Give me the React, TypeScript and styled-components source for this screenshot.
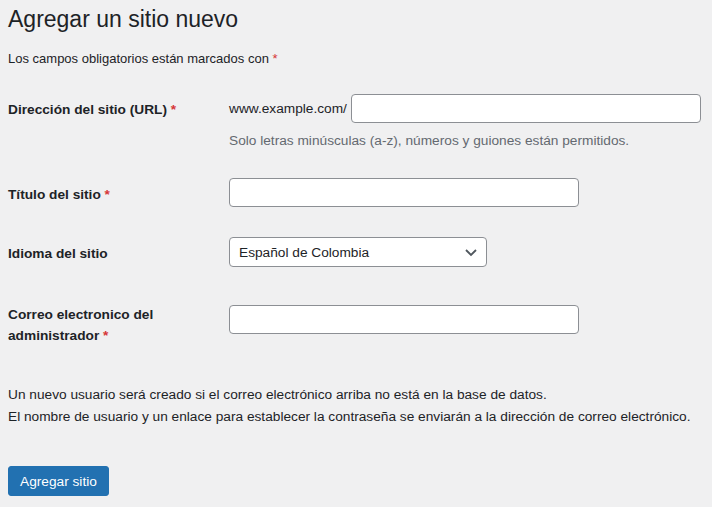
import React from "react";
import styled, { createGlobalStyle } from "styled-components";

const Global = createGlobalStyle`
  body {
    margin: 0;
    background: #f0f0f1;
    color: #1d2327;
    font-family: "Segoe UI", "Liberation Sans", Arial, sans-serif;
    font-size: 13.7px;
  }
`;

const Page = styled.div`
  padding: 0 8px;
`;

const Title = styled.h1`
  margin: 0;
  padding: 5px 0 4px;
  font-size: 23px;
  font-weight: 400;
  line-height: 29px;
`;

const Note = styled.p`
  margin: 11px 0 10px;
  line-height: 19px;
  font-size: 13px;
`;

const Req = styled.span`
  color: #d63638;
`;

const Form = styled.div`
  display: grid;
  grid-template-columns: 221px 1fr;
  align-items: start;
`;

const Label = styled.div<{ $top: number }>`
  font-weight: 600;
  line-height: 21px;
  padding-top: ${({ $top }) => $top}px;
`;

const Cell = styled.div<{ $top: number; $bottom: number }>`
  padding: ${({ $top, $bottom }) => `${$top}px 0 ${$bottom}px`};
`;

const Inline = styled.div`
  display: flex;
  align-items: center;
  gap: 4px;
`;

const Input = styled.input<{ $w: number }>`
  box-sizing: border-box;
  width: ${({ $w }) => $w}px;
  height: 29px;
  border: 1px solid #8c8f94;
  border-radius: 4px;
  background: #fff;
  font: inherit;
  padding: 0 8px;
`;

const Desc = styled.p`
  margin: 8px 0 0;
  color: #646970;
  line-height: 19px;
`;

const Select = styled.div`
  box-sizing: border-box;
  width: 258px;
  height: 30px;
  border: 1px solid #8c8f94;
  border-radius: 4px;
  background: #fff;
  display: flex;
  align-items: center;
  justify-content: space-between;
  padding: 0 8px 0 9px;
`;

const Info = styled.p`
  margin: 0;
  line-height: 22px;
`;

const Spacer = styled.div`
  height: 34px;
`;

const Button = styled.button`
  margin-top: 38px;
  height: 30px;
  padding: 0 11px;
  background: #2271b1;
  color: #fff;
  border: 1px solid #2271b1;
  border-radius: 3px;
  font: inherit;
`;

export default function App() {
  return (
    <Page>
      <Global />
      <Title>Agregar un sitio nuevo</Title>
      <Note>
        Los campos obligatorios están marcados con <Req>*</Req>
      </Note>
      <Form>
        <Label $top={21}>
          Dirección del sitio (URL) <Req>*</Req>
        </Label>
        <Cell $top={16} $bottom={11}>
          <Inline>
            www.example.com/
            <Input $w={350} />
          </Inline>
          <Desc>Solo letras minúsculas (a-z), números y guiones están permitidos.</Desc>
        </Cell>
        <Label $top={23}>
          Título del sitio <Req>*</Req>
        </Label>
        <Cell $top={17} $bottom={16}>
          <Input $w={350} />
        </Cell>
        <Label $top={20}>Idioma del sitio</Label>
        <Cell $top={14} $bottom={16}>
          <Select>
            <span>Español de Colombia</span>
            <svg width="14" height="14" viewBox="0 0 14 14">
              <path d="M2 5l5 5 5-5" fill="none" stroke="#50575e" strokeWidth="1.8" />
            </svg>
          </Select>
        </Cell>
        <Label $top={21}>
          Correo electronico del
          <br />
          administrador <Req>*</Req>
        </Label>
        <Cell $top={22} $bottom={16}>
          <Input $w={350} />
        </Cell>
      </Form>
      <Spacer />
      <Info>Un nuevo usuario será creado si el correo electrónico arriba no está en la base de datos.</Info>
      <Info>El nombre de usuario y un enlace para establecer la contraseña se enviarán a la dirección de correo electrónico.</Info>
      <Button>Agregar sitio</Button>
    </Page>
  );
}
